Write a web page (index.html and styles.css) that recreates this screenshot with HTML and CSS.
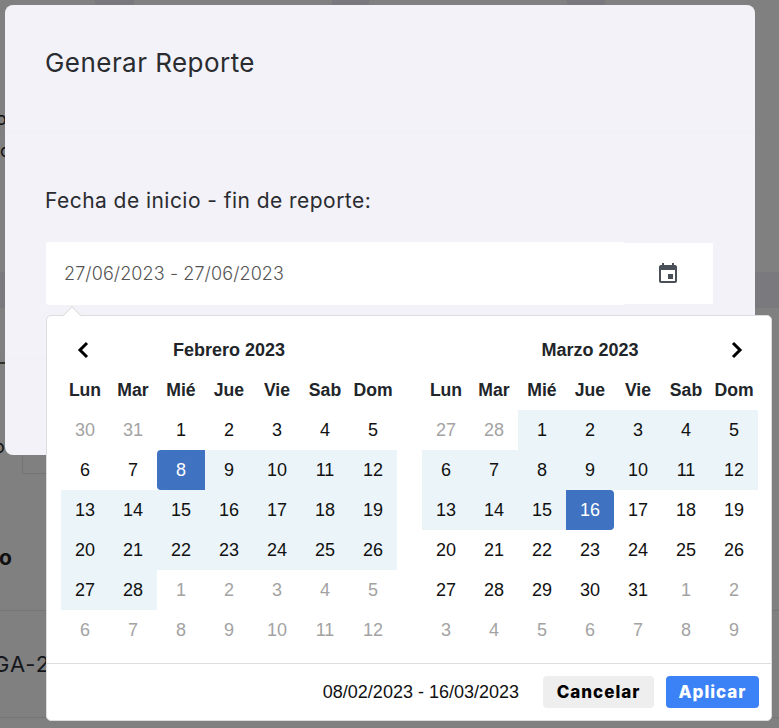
FILE: index.html
```html
<!DOCTYPE html>
<html lang="es">
<head>
<meta charset="utf-8">
<title>Generar Reporte</title>
<link rel="stylesheet" href="styles.css">
</head>
<body>
<div class="behind">
  <div class="strip"><span class="seg seg-a"></span><span class="seg seg-b"></span><span class="seg seg-c"></span></div>
  <div class="bit bit-1">o</div>
  <div class="bit bit-2">c</div>
  <div class="band"></div>
  <div class="dash"></div>
  <div class="bit bit-3">o</div>
  <div class="ghost-box"></div>
  <div class="bold-o">o</div>
  <div class="rule rule-a"></div>
  <div class="code">GA-2</div>
  <div class="rule rule-b"></div>
</div>

<section class="modal">
  <header class="modal-head"><h1 class="modal-title">Generar Reporte</h1></header>
  <div class="modal-body">
    <label class="field-label">Fecha de inicio - fin de reporte:</label>
    <div class="input-group">
      <div class="input-text">27/06/2023 - 27/06/2023</div>
      <div class="input-addon">
        <svg class="cal-icon" viewBox="0 0 24 24" width="24" height="24"><path d="M17 12h-5v5h5v-5zM16 1v2H8V1H6v2H5c-1.11 0-1.99.9-1.99 2L3 19c0 1.1.89 2 2 2h14c1.1 0 2-.9 2-2V5c0-1.1-.9-2-2-2h-1V1h-2zm3 18H5V8h14v11z"/></svg>
      </div>
    </div>
  </div>
  <div class="modal-rule"></div>
</section>

<section class="picker">
  <div class="calendars">
    <div class="cal">
      <div class="nav"><svg class="chev chev-prev" viewBox="0 0 12 18" width="12" height="18"><path d="M10 2 3 9l7 7"/></svg></div>
      <div class="month">Febrero 2023</div>
      <div class="nav"></div>
      <div class="dow">Lun</div><div class="dow">Mar</div><div class="dow">Mié</div><div class="dow">Jue</div><div class="dow">Vie</div><div class="dow">Sab</div><div class="dow">Dom</div>
      <div class="d off">30</div><div class="d off">31</div><div class="d">1</div><div class="d">2</div><div class="d">3</div><div class="d">4</div><div class="d">5</div>
      <div class="d">6</div><div class="d">7</div><div class="d start">8</div><div class="d in">9</div><div class="d in">10</div><div class="d in">11</div><div class="d in">12</div>
      <div class="d in">13</div><div class="d in">14</div><div class="d in">15</div><div class="d in">16</div><div class="d in">17</div><div class="d in">18</div><div class="d in">19</div>
      <div class="d in">20</div><div class="d in">21</div><div class="d in">22</div><div class="d in">23</div><div class="d in">24</div><div class="d in">25</div><div class="d in">26</div>
      <div class="d in">27</div><div class="d in">28</div><div class="d off">1</div><div class="d off">2</div><div class="d off">3</div><div class="d off">4</div><div class="d off">5</div>
      <div class="d off">6</div><div class="d off">7</div><div class="d off">8</div><div class="d off">9</div><div class="d off">10</div><div class="d off">11</div><div class="d off">12</div>
    </div>
    <div class="cal">
      <div class="nav"></div>
      <div class="month">Marzo 2023</div>
      <div class="nav"><svg class="chev chev-next" viewBox="0 0 12 18" width="12" height="18"><path d="M2 2l7 7-7 7"/></svg></div>
      <div class="dow">Lun</div><div class="dow">Mar</div><div class="dow">Mié</div><div class="dow">Jue</div><div class="dow">Vie</div><div class="dow">Sab</div><div class="dow">Dom</div>
      <div class="d off">27</div><div class="d off">28</div><div class="d in">1</div><div class="d in">2</div><div class="d in">3</div><div class="d in">4</div><div class="d in">5</div>
      <div class="d in">6</div><div class="d in">7</div><div class="d in">8</div><div class="d in">9</div><div class="d in">10</div><div class="d in">11</div><div class="d in">12</div>
      <div class="d in">13</div><div class="d in">14</div><div class="d in">15</div><div class="d end">16</div><div class="d">17</div><div class="d">18</div><div class="d">19</div>
      <div class="d">20</div><div class="d">21</div><div class="d">22</div><div class="d">23</div><div class="d">24</div><div class="d">25</div><div class="d">26</div>
      <div class="d">27</div><div class="d">28</div><div class="d">29</div><div class="d">30</div><div class="d">31</div><div class="d off">1</div><div class="d off">2</div>
      <div class="d off">3</div><div class="d off">4</div><div class="d off">5</div><div class="d off">6</div><div class="d off">7</div><div class="d off">8</div><div class="d off">9</div>
    </div>
  </div>
  <footer class="picker-foot">
    <span class="range">08/02/2023 - 16/03/2023</span>
    <button class="btn btn-cancel">Cancelar</button>
    <button class="btn btn-apply">Aplicar</button>
  </footer>
</section>
</body>
</html>
```
FILE: styles.css
```css
* { box-sizing: border-box; }
html, body { margin: 0; padding: 0; }
body {
  width: 779px;
  height: 728px;
  overflow: hidden;
  position: relative;
  background: #808080;
  font-family: "Inter", "Liberation Sans", sans-serif;
  color: #212529;
}

/* page dimmed behind the dialog */
.behind { display: flex; flex-direction: column; height: 728px; overflow: hidden; }
.strip { display: flex; height: 5px; flex: none; }
.seg { display: block; height: 5px; background: #78787e; }
.seg-a { margin-left: 95px; width: 39px; }
.seg-b { margin-left: 198px; width: 37px; }
.seg-c { margin-left: 198px; width: 38px; }
.bit { height: 14px; line-height: 14px; font-size: 18px; color: #111; flex: none; }
.bit-1 { margin-top: 107px; margin-left: -4px; }
.bit-2 { margin-top: 18px; margin-left: 0; }
.bit-3 { margin-top: 76px; margin-left: -6px; }
.band { height: 36px; margin-top: 114px; background: #7a7a7e; flex: none; }
.dash { width: 5px; height: 2px; margin-top: 54px; background: #33302a; flex: none; }
.ghost-box { width: 40px; height: 19px; margin: 1px 0 0 22px; border: 1px solid #747474; border-top: 0; flex: none; }
.bold-o { height: 24px; line-height: 24px; margin-top: 72px; margin-left: -1px; font-size: 21px; font-weight: 700; color: #111; flex: none; }
.rule { height: 1px; background: #767676; flex: none; }
.rule-a { margin-top: 40px; }
.code { height: 30px; line-height: 30px; margin-top: 38px; margin-left: -7px; font-size: 22px; color: #15171c; letter-spacing: 1px; flex: none; }
.rule-b { margin-top: 38px; }

/* dialog */
.modal {
  position: absolute;
  left: 5px;
  top: 5px;
  width: 750px;
  height: 450px;
  border-radius: 8px;
  background: #f2f2f8;
}
.modal-head { height: 127px; padding: 37px 40px 0; border-bottom: 1px solid #efeff5; }
.modal-title { margin: 0; font-size: 26px; line-height: 42px; font-weight: 400; color: #2a2c30; letter-spacing: 0.45px; }
.modal-body { padding: 54px 41px 0 41px; }
.field-label { display: block; height: 30px; line-height: 30px; margin-left: -1px; font-size: 21px; letter-spacing: 0.45px; color: #2a2c30; }
.input-group { display: flex; align-items: center; margin-top: 26px; }
.input-text {
  width: 578px;
  height: 63px;
  line-height: 63px;
  padding-left: 18px;
  background: #fff;
  border-radius: 3px 0 0 3px;
  font-size: 18px;
  font-weight: 300;
  letter-spacing: 0.1px;
  color: #555;
}
.input-addon {
  display: flex;
  align-items: center;
  justify-content: flex-start;
  width: 89px;
  height: 61px;
  padding-left: 32px;
  background: #fff;
}
.cal-icon { fill: #495057; display: block; }
.modal-rule { height: 1px; margin-top: 53px; background: #efeff5; }

/* date range popover */
.picker {
  position: absolute;
  left: 46px;
  top: 315px;
  width: 726px;
  height: 406px;
  background: #fff;
  border: 1px solid #ddd;
  border-radius: 5px;
  font-family: "Liberation Sans", Arial, sans-serif;
  font-size: 18px;
  color: #111;
}
.picker::before {
  content: "";
  position: absolute;
  left: 18px;
  top: -7px;
  width: 13px;
  height: 13px;
  background: #fff;
  border-top: 1px solid #ddd;
  border-left: 1px solid #ddd;
  transform: rotate(45deg);
}
.calendars { display: flex; gap: 25px; padding: 14px 13px 13px 14px; border-bottom: 1px solid #ddd; height: 348px; }
.cal { display: grid; grid-template-columns: repeat(7, 48px); grid-template-rows: repeat(8, 40px); width: 336px; }
.nav { display: flex; align-items: center; justify-content: center; }
.chev { display: block; fill: none; stroke: #000; stroke-width: 3; }
.chev-prev { margin-right: 5px; }
.chev-next { margin-left: 6px; }
.month { grid-column: span 5; display: flex; align-items: center; justify-content: center; font-weight: 700; font-size: 18px; color: #212529; }
.dow { display: flex; align-items: center; justify-content: center; font-weight: 700; font-size: 17.6px; color: #212529; }
.d { display: flex; align-items: center; justify-content: center; color: #111; }
.d.off { color: #a3a3a3; }
.d.in { background: #ebf4f8; }
.d.start { background: #3f72c0; color: #fff; border-radius: 4px 0 0 4px; }
.d.end { background: #3f72c0; color: #fff; border-radius: 0 4px 4px 0; }
.picker-foot { display: flex; align-items: center; justify-content: flex-end; height: 56px; padding: 0 12px; }
.range { margin-right: 24px; font-size: 18px; color: #111; }
.btn {
  height: 32px;
  padding: 0;
  border: 0;
  border-radius: 4px;
  font-family: "Inter", "Liberation Sans", sans-serif;
  font-weight: 800;
  font-size: 17px;
  letter-spacing: 1px;
}
.btn-cancel { width: 111px; margin-right: 12px; background: #eee; color: #000; }
.btn-apply { width: 93px; background: #3b82f6; color: #fff; }
```
